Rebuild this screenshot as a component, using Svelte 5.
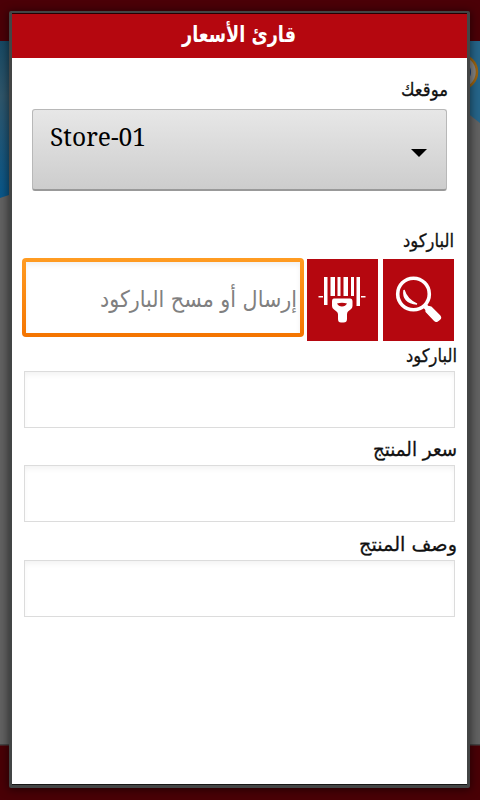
<script>
  const fields = [
    { label: 'الباركود', width: 51, size: 18.5, height: 30 },
    { label: 'سعر المنتج', width: 84, size: 19.5, height: 37 },
    { label: 'وصف المنتج', width: 98, size: 19.5, height: 38 }
  ];
</script>

{#snippet arabic(text, width, size, baseline, height)}
  <svg class="text" {width} {height} direction="rtl">
    <text x={width} y={baseline} font-size={size} textLength={width} lengthAdjust="spacingAndGlyphs">{text}</text>
  </svg>
{/snippet}

<div class="screen">
  <svg class="backdrop" width="480" height="800">
    <defs>
      <linearGradient id="sky" x1="0" y1="0" x2="0" y2="1">
        <stop offset="0" stop-color="#174964" />
        <stop offset=".35" stop-color="#2f566b" />
        <stop offset="1" stop-color="#08578a" />
      </linearGradient>
    </defs>
    <rect width="480" height="800" fill="#626262" />
    <path d="M0 41H12V194L0 198Z" fill="url(#sky)" />
    <path d="M466 41H480V123L466 112Z" fill="#25658a" />
    <circle cx="460" cy="72" r="17" fill="#858585" stroke="#9a6412" stroke-width="2.5" />
    <circle cx="460" cy="72" r="11" fill="#173e78" />
    <rect width="480" height="41" fill="#4b0007" />
    <rect y="745" width="480" height="55" fill="#490006" />
    <rect y="744" width="480" height="1.5" fill="#444" />
  </svg>

  <main class="dialog">
    <header>{@render arabic('قارئ الأسعار', 114, 22, 28, 44)}</header>

    <section class="location">
      <div class="caption">{@render arabic('موقعك', 47, 19, 20, 32)}</div>
      <button class="spinner" type="button">
        <svg class="store" width="97" height="40">
          <text x="0" y="28" font-size="26" textLength="96" lengthAdjust="spacingAndGlyphs">Store-01</text>
        </svg>
        <svg class="arrow" width="16" height="8"><path d="M0 0H16L8 8Z" /></svg>
      </button>
    </section>

    <section class="search">
      <div class="caption">{@render arabic('الباركود', 51, 18.5, 20, 32)}</div>
      <div class="row">
        <div class="entry"><div class="inner">
          {@render arabic('إرسال أو مسح الباركود', 197, 23, 45, 71)}
        </div></div>
        <button class="tile" type="button" aria-label="مسح">
          <svg width="71" height="82" fill="#fff">
            <path d="M17 18h3.500v28h-3.500zM23.500 18h4.500v19h-4.500zM30.500 18h3v19h-3zM36.500 18h4.500v19h-4.500zM44 18h3v19h-3zM49.500 18h3.500v29h-3.500zM11.500 37h4.500v1.500h-4.500zM54 37h4.500v1.500h-4.500z" />
            <path fill-rule="evenodd" d="M27 39.500H43Q45.500 39.500 45.500 42.500V47Q45.500 49 43.500 50.500L41 52.500Q40 53.500 40 55.500V60Q40 63.500 36.500 63.500H34Q31 63.500 31 60V55.500Q31 53.500 29.500 52.500L27 50.500Q25 49 25 47V42.500Q25 39.500 27 39.500ZM30 44.500Q31.500 47.500 35 47.500Q38.500 47.500 40 44.500Q35 43 30 44.500Z" />
          </svg>
        </button>
        <button class="tile" type="button" aria-label="بحث">
          <svg width="71" height="82" fill="none" stroke="#fff">
            <circle cx="30.500" cy="35" r="15.800" stroke-width="3.600" />
            <path d="M21 31Q19 43.500 34 45Q24 41 21 31Z" fill="#fff" stroke-width="1.300" />
            <path d="M41 46L46 51" stroke-width="5" />
            <path d="M43 52.500V50Q43 47.500 46 47.500L48 48L57 57Q58.500 59 56.500 60.500L54.500 62Q53 63 51.500 61.500Z" fill="#fff" stroke-width="1.200" stroke-linejoin="round" />
          </svg>
        </button>
      </div>
    </section>

    <section class="results">
      {#each fields as f}
        <div class="field-label" style:height="{f.height}px">
          {@render arabic(f.label, f.width, f.size, 20, 29)}
        </div>
        <div class="field"></div>
      {/each}
    </section>
  </main>
</div>

<style>
  .screen {
    position: relative;
    width: 480px;
    height: 800px;
    overflow: hidden;
    box-sizing: border-box;
    padding: 11px 10px 12px 9px;
  }
  .backdrop { position: absolute; left: 0; top: 0; }
  .text {
    display: block;
    overflow: visible;
    fill: #111;
    stroke: #111;
    stroke-width: .3px;
    font-family: 'DejaVu Sans', sans-serif;
  }
  .dialog {
    position: relative;
    box-sizing: border-box;
    height: 777px;
    background: #fff;
    border: solid #434545;
    border-width: 2px 3px 3px;
    border-radius: 2px;
    box-shadow: 0 1px 8px 1px rgba(0, 0, 0, .5), inset 0 1px #250003, inset 0 -1px #171717;
  }
  header {
    height: 44px;
    margin-top: 1px;
    padding-right: 2px;
    display: flex;
    justify-content: center;
    background: #b5070f;
  }
  header .text { fill: #fff; stroke: none; font-weight: bold; }
  .location { padding: 18px 21px 0 20px; }
  .caption { height: 32px; display: flex; justify-content: flex-end; }
  .location .caption { margin-right: -2px; }
  .spinner {
    box-sizing: border-box;
    width: 415px;
    height: 82px;
    padding: 8px 19px 0 17px;
    display: flex;
    justify-content: space-between;
    border: 1px solid #b8b8b8;
    border-bottom: 2px solid #999;
    border-radius: 3px;
    background: linear-gradient(#e7e7e7, #cdcdcd);
    margin-top: 1px;
  }
  .store { overflow: visible; font-family: 'Noto Serif', 'Droid Serif', 'DejaVu Serif', serif; }
  .arrow { margin-top: 31px; }
  .search { padding: 36px 13px 0 10px; }
  .row { display: flex; }
  .entry {
    box-sizing: border-box;
    width: 282px;
    height: 79px;
    margin-top: -1px;
    padding: 4px;
    border-radius: 4px;
    background: linear-gradient(#ff9c22, #f47400);
  }
  .inner {
    height: 71px;
    display: flex;
    justify-content: flex-end;
    padding-right: 3px;
    background: #fff;
    box-shadow: inset 0 3px 5px #f1f1f1;
  }
  .inner .text { fill: #808080; stroke: none; }
  .tile { width: 71px; height: 82px; padding: 0; border: 0; background: #b5070f; margin-left: 3px; }
  .tile + .tile { margin-left: 5px; }
  .tile svg { display: block; }
  .results { padding: 0 13px 0 12px; }
  .field-label { display: flex; justify-content: flex-end; align-items: flex-end; margin-right: -3px; }
  .field {
    box-sizing: border-box;
    width: 431px;
    height: 57px;
    border: 1px solid #dcdcdc;
    box-shadow: inset 0 4px 6px -2px #f0f0f0;
  }
</style>
